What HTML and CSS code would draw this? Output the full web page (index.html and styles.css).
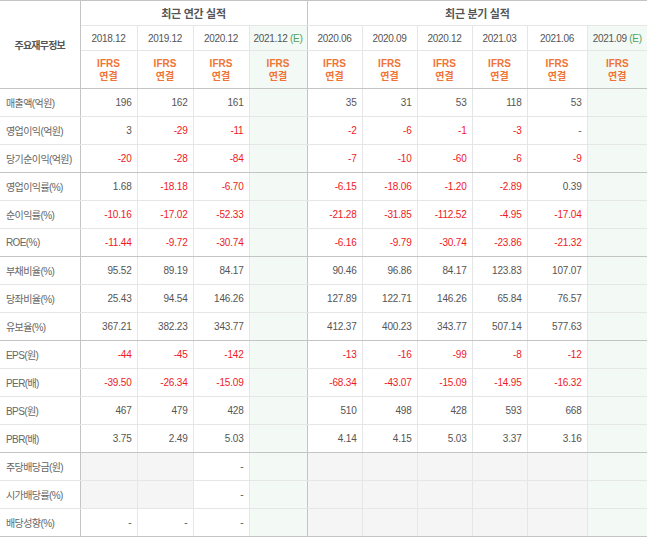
FILE: index.html
```html
<!DOCTYPE html>
<html lang="ko">
<head>
<meta charset="utf-8">
<link rel="stylesheet" href="styles.css">
</head>
<body>
<table class="fin">
  <colgroup>
    <col class="c-label"><col class="c-a1"><col class="c-a"><col class="c-a"><col class="c-ae">
    <col class="c-q"><col class="c-q"><col class="c-q"><col class="c-q"><col class="c-q6"><col class="c-qe">
  </colgroup>
  <thead>
    <tr class="h1">
      <th rowspan="3" class="lbl-h">주요재무정보</th>
      <th colspan="4" class="grp sep">최근 연간 실적</th>
      <th colspan="6" class="grp">최근 분기 실적</th>
    </tr>
    <tr class="h2">
      <th>2018.12</th><th>2019.12</th><th>2020.12</th><th class="est sep">2021.12 <em>(E)</em></th>
      <th>2020.06</th><th>2020.09</th><th>2020.12</th><th>2021.03</th><th>2021.06</th><th class="est">2021.09 <em>(E)</em></th>
    </tr>
    <tr class="h3">
      <th>IFRS<br>연결</th><th>IFRS<br>연결</th><th>IFRS<br>연결</th><th class="est sep">IFRS<br>연결</th>
      <th>IFRS<br>연결</th><th>IFRS<br>연결</th><th>IFRS<br>연결</th><th>IFRS<br>연결</th><th>IFRS<br>연결</th><th class="est">IFRS<br>연결</th>
    </tr>
  </thead>
  <tbody>
    <tr><th>매출액(억원)</th><td>196</td><td>162</td><td>161</td><td class="est sep"></td><td>35</td><td>31</td><td>53</td><td>118</td><td>53</td><td class="est"></td></tr>
    <tr><th>영업이익(억원)</th><td>3</td><td class="n">-29</td><td class="n">-11</td><td class="est sep"></td><td class="n">-2</td><td class="n">-6</td><td class="n">-1</td><td class="n">-3</td><td>-</td><td class="est"></td></tr>
    <tr class="end"><th>당기순이익(억원)</th><td class="n">-20</td><td class="n">-28</td><td class="n">-84</td><td class="est sep"></td><td class="n">-7</td><td class="n">-10</td><td class="n">-60</td><td class="n">-6</td><td class="n">-9</td><td class="est"></td></tr>

    <tr><th>영업이익률(%)</th><td>1.68</td><td class="n">-18.18</td><td class="n">-6.70</td><td class="est sep"></td><td class="n">-6.15</td><td class="n">-18.06</td><td class="n">-1.20</td><td class="n">-2.89</td><td>0.39</td><td class="est"></td></tr>
    <tr><th>순이익률(%)</th><td class="n">-10.16</td><td class="n">-17.02</td><td class="n">-52.33</td><td class="est sep"></td><td class="n">-21.28</td><td class="n">-31.85</td><td class="n">-112.52</td><td class="n">-4.95</td><td class="n">-17.04</td><td class="est"></td></tr>
    <tr class="end"><th>ROE(%)</th><td class="n">-11.44</td><td class="n">-9.72</td><td class="n">-30.74</td><td class="est sep"></td><td class="n">-6.16</td><td class="n">-9.79</td><td class="n">-30.74</td><td class="n">-23.86</td><td class="n">-21.32</td><td class="est"></td></tr>

    <tr><th>부채비율(%)</th><td>95.52</td><td>89.19</td><td>84.17</td><td class="est sep"></td><td>90.46</td><td>96.86</td><td>84.17</td><td>123.83</td><td>107.07</td><td class="est"></td></tr>
    <tr><th>당좌비율(%)</th><td>25.43</td><td>94.54</td><td>146.26</td><td class="est sep"></td><td>127.89</td><td>122.71</td><td>146.26</td><td>65.84</td><td>76.57</td><td class="est"></td></tr>
    <tr class="end"><th>유보율(%)</th><td>367.21</td><td>382.23</td><td>343.77</td><td class="est sep"></td><td>412.37</td><td>400.23</td><td>343.77</td><td>507.14</td><td>577.63</td><td class="est"></td></tr>

    <tr><th>EPS(원)</th><td class="n">-44</td><td class="n">-45</td><td class="n">-142</td><td class="est sep"></td><td class="n">-13</td><td class="n">-16</td><td class="n">-99</td><td class="n">-8</td><td class="n">-12</td><td class="est"></td></tr>
    <tr><th>PER(배)</th><td class="n">-39.50</td><td class="n">-26.34</td><td class="n">-15.09</td><td class="est sep"></td><td class="n">-68.34</td><td class="n">-43.07</td><td class="n">-15.09</td><td class="n">-14.95</td><td class="n">-16.32</td><td class="est"></td></tr>
    <tr><th>BPS(원)</th><td>467</td><td>479</td><td>428</td><td class="est sep"></td><td>510</td><td>498</td><td>428</td><td>593</td><td>668</td><td class="est"></td></tr>
    <tr class="end"><th>PBR(배)</th><td>3.75</td><td>2.49</td><td>5.03</td><td class="est sep"></td><td>4.14</td><td>4.15</td><td>5.03</td><td>3.37</td><td>3.16</td><td class="est"></td></tr>

    <tr class="div"><th>주당배당금(원)</th><td class="g"></td><td class="g"></td><td>-</td><td class="est sep"></td><td class="g"></td><td class="g"></td><td class="g"></td><td class="g"></td><td class="g"></td><td class="est"></td></tr>
    <tr class="div"><th>시가배당률(%)</th><td class="g"></td><td class="g"></td><td>-</td><td class="est sep"></td><td class="g"></td><td class="g"></td><td class="g"></td><td class="g"></td><td class="g"></td><td class="est"></td></tr>
    <tr class="div end"><th>배당성향(%)</th><td>-</td><td>-</td><td>-</td><td class="est sep"></td><td class="g"></td><td class="g"></td><td class="g"></td><td class="g"></td><td class="g"></td><td class="est"></td></tr>
  </tbody>
</table>
</body>
</html>
```
FILE: styles.css
```css
html, body {
  margin: 0;
  padding: 0;
  background: #fff;
}
.fin {
  border-collapse: collapse;
  table-layout: fixed;
  width: 647px;
  font-family: "Liberation Sans", "Noto Sans CJK KR", sans-serif;
  font-size: 10px;
  color: #555;
}
.c-label { width: 80px; }
.c-a1 { width: 57px; }
.c-a { width: 56px; }
.c-ae { width: 58px; }
.c-q { width: 55px; }
.c-q6 { width: 60px; }
.c-qe { width: 60px; }

.fin th, .fin td {
  border: 1px solid #e6e6e6;
  padding: 0;
  font-weight: normal;
  overflow: hidden;
  white-space: nowrap;
}
.fin tr > :first-child { border-left: none; }
.fin tr > :last-child { border-right: none; }
.fin thead tr.h1 th { border-top: 1px solid #c4c4c4; }

.fin thead th {
  text-align: center;
  color: #555;
}
.fin .h1 { height: 25px; }
.fin .h1 .grp {
  font-weight: bold;
  color: #555;
  font-size: 11px;
  letter-spacing: -0.3px;
}
.fin .h2 { height: 25px; }
.fin .h2 th { letter-spacing: -0.3px; }
.fin .h3 { height: 38px; }
.fin .h3 th {
  color: #ef7435;
  font-weight: bold;
  line-height: 13px;
  border-bottom: 1px solid #c4c4c4;
  vertical-align: middle;
}
.fin .lbl-h {
  font-weight: bold;
  color: #555;
  letter-spacing: -0.8px;
  border-bottom: 1px solid #c4c4c4;
  border-right: 1px solid #c4c4c4;
}
.fin .sep { border-right: 1px solid #c4c4c4; }
.fin .grp.sep { border-right: 1px solid #c4c4c4; }
.fin em {
  font-style: normal;
  color: #4ea35a;
}
.fin .est { background: #f3f9f4; }

.fin tbody tr { height: 28px; }
.fin tbody th {
  text-align: left;
  padding-left: 6px;
  color: #666;
  letter-spacing: -0.6px;
  border-right: 1px solid #c4c4c4;
}
.fin tbody td {
  text-align: right;
  padding-right: 5px;
  color: #555;
  letter-spacing: -0.2px;
}
.fin tbody td.n { color: #f0191e; }
.fin tbody tr.end > * { border-bottom: 1px solid #c4c4c4; }
.fin tbody td.g { background: #f5f5f5; }
```
